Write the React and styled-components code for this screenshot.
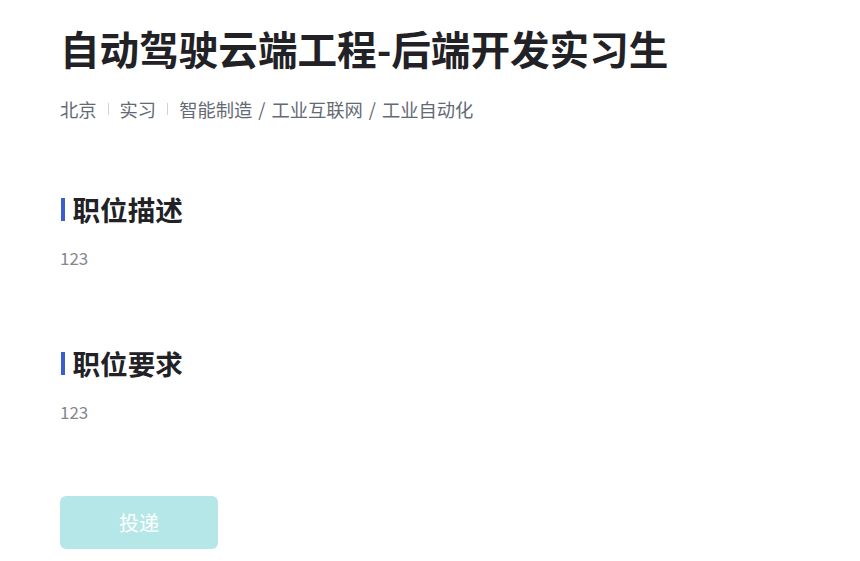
import React from "react";
import styled, { createGlobalStyle } from "styled-components";

const Global = createGlobalStyle`
  html, body { margin: 0; padding: 0; background: #fff; }
  body { font-family: "Noto Sans CJK SC", "Noto Sans", sans-serif; }
`;

const Page = styled.div`
  padding: 20px 60px;
  display: flex;
  flex-direction: column;
  align-items: flex-start;
`;

const Title = styled.h1`
  margin: 0;
  font-size: 39.6px;
  line-height: 56px;
  font-weight: 700;
  color: #222226;
`;

const Meta = styled.div`
  margin-top: 20px;
  display: flex;
  align-items: center;
  font-size: 18.3px;
  line-height: 26px;
  color: #646a73;
`;

const Divider = styled.span`
  width: 1px;
  height: 12px;
  background: #d0d3d6;
  margin: 0 11px;
`;

const Slash = styled.span`
  margin: 0 6px;
`;

const Section = styled.section`
  margin-top: ${(p) => p.$gap}px;
  display: flex;
  flex-direction: column;
`;

const Heading = styled.h2`
  margin: 0;
  display: flex;
  align-items: center;
  font-size: 27.6px;
  line-height: 38px;
  font-weight: 700;
  color: #222226;
  &::before {
    content: "";
    width: 3.5px;
    height: 23px;
    background: #3a5fcd;
    margin-right: 8px;
    margin-left: 1px;
  }
`;

const Body = styled.p`
  margin: 18px 0 0;
  font-size: 17px;
  line-height: 24px;
  color: #84878d;
`;

const Apply = styled.button`
  margin-top: 72px;
  width: 158px;
  height: 53px;
  border: none;
  border-radius: 6px;
  background: #b6e7e8;
  color: #fff;
  font-family: inherit;
  font-size: 20px;
  cursor: not-allowed;
`;

const categories = ["智能制造", "工业互联网", "工业自动化"];

export default function App() {
  return (
    <>
      <Global />
      <Page>
        <Title>自动驾驶云端工程-后端开发实习生</Title>
        <Meta>
          <span>北京</span>
          <Divider />
          <span>实习</span>
          <Divider />
          {categories.map((c, i) => (
            <React.Fragment key={c}>
              {i > 0 && <Slash>/</Slash>}
              <span>{c}</span>
            </React.Fragment>
          ))}
        </Meta>
        <Section $gap={68}>
          <Heading>职位描述</Heading>
          <Body>123</Body>
        </Section>
        <Section $gap={74}>
          <Heading>职位要求</Heading>
          <Body>123</Body>
        </Section>
        <Apply disabled>投递</Apply>
      </Page>
    </>
  );
}
